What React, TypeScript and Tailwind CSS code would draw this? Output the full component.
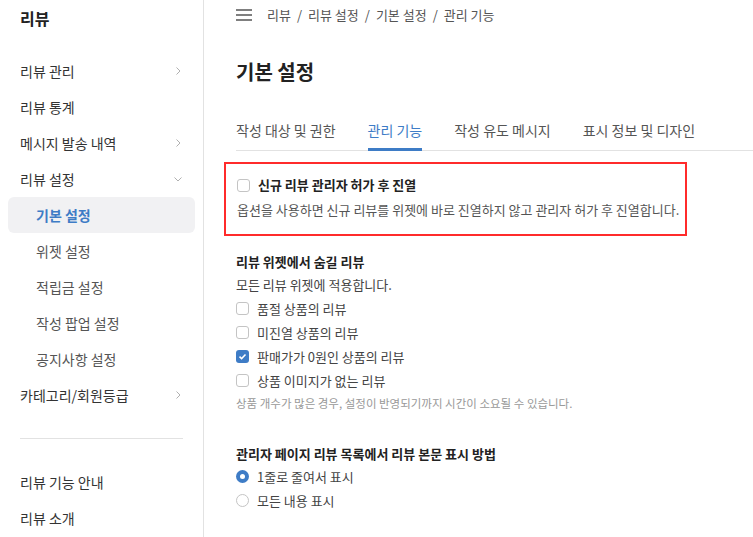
import React from 'react';

const FONT = "font-['Noto_Sans_CJK_KR','Noto_Sans',sans-serif]";

const Chevron: React.FC<{ down?: boolean }> = ({ down }) => (
  <svg width="10" height="10" viewBox="0 0 10 10" className="text-[#b0b0b0]">
    {down ? (
      <path d="M1.5 3.5 L5 7 L8.5 3.5" fill="none" stroke="currentColor" strokeWidth="1" />
    ) : (
      <path d="M3.5 1.5 L7 5 L3.5 8.5" fill="none" stroke="currentColor" strokeWidth="1" />
    )}
  </svg>
);

const Checkbox: React.FC<{ checked?: boolean }> = ({ checked }) =>
  checked ? (
    <span className="w-[13px] h-[13px] rounded-[3px] bg-[#3e7cc6] flex items-center justify-center shrink-0">
      <svg width="9" height="9" viewBox="0 0 9 9">
        <path d="M1.5 4.6 L3.6 6.6 L7.5 2.5" fill="none" stroke="white" strokeWidth="1.5" />
      </svg>
    </span>
  ) : (
    <span className="w-[13px] h-[13px] rounded-[3px] border border-[#c4c4c4] bg-white shrink-0" />
  );

const Radio: React.FC<{ checked?: boolean }> = ({ checked }) =>
  checked ? (
    <span className="w-[13px] h-[13px] rounded-full bg-[#3e7cc6] flex items-center justify-center shrink-0">
      <span className="w-[5px] h-[5px] rounded-full bg-white" />
    </span>
  ) : (
    <span className="w-[13px] h-[13px] rounded-full border border-[#c4c4c4] bg-white shrink-0" />
  );

const menu = [
  { label: '리뷰 관리', chevron: 'right' },
  { label: '리뷰 통계' },
  { label: '메시지 발송 내역', chevron: 'right' },
  { label: '리뷰 설정', chevron: 'down' },
];

const subMenu = ['기본 설정', '위젯 설정', '적립금 설정', '작성 팝업 설정', '공지사항 설정'];

const crumbs = ['리뷰', '리뷰 설정', '기본 설정', '관리 기능'];

const tabs = ['작성 대상 및 권한', '관리 기능', '작성 유도 메시지', '표시 정보 및 디자인'];

const hideOptions = [
  { label: '품절 상품의 리뷰', checked: false },
  { label: '미진열 상품의 리뷰', checked: false },
  { label: '판매가가 0원인 상품의 리뷰', checked: true },
  { label: '상품 이미지가 없는 리뷰', checked: false },
];

const App: React.FC = () => {
  return (
    <div className={`${FONT} w-[753px] h-[537px] overflow-hidden flex bg-white text-[#333]`}>
      {/* sidebar */}
      <aside className="w-[204px] shrink-0 border-r border-[#e2e2e2] flex flex-col">
        <div className="h-[36px] flex items-center px-5 text-[16px] font-bold text-[#222]">리뷰</div>
        <nav className="mt-[17px] flex flex-col">
          {menu.map((m) => (
            <div key={m.label} className="h-[36px] flex items-center justify-between pl-5 pr-[20px] text-[14px]">
              <span>{m.label}</span>
              {m.chevron && <Chevron down={m.chevron === 'down'} />}
            </div>
          ))}
          {subMenu.map((s, i) => (
            <div
              key={s}
              className={
                i === 0
                  ? 'mx-2 h-[36px] flex items-center pl-7 rounded-md bg-[#f1f1f3] text-[14px] font-bold text-[#3e7cc6]'
                  : 'mx-2 h-[36px] flex items-center pl-7 text-[14px] text-[#555]'
              }
            >
              {s}
            </div>
          ))}
          <div className="h-[36px] flex items-center justify-between pl-5 pr-[20px] text-[14px]">
            <span>카테고리/회원등급</span>
            <Chevron />
          </div>
        </nav>
        <div className="mx-5 mt-[25px] border-t border-[#e2e2e2]" />
        <div className="mt-[25px] flex flex-col">
          <div className="h-[36px] flex items-center pl-5 text-[14px]">리뷰 기능 안내</div>
          <div className="h-[36px] flex items-center pl-5 text-[14px]">리뷰 소개</div>
        </div>
      </aside>

      {/* main */}
      <main className="flex-1 flex flex-col pl-8">
        <div className="h-[30px] flex items-center gap-[15px]">
          <svg width="16" height="12" viewBox="0 0 16 12" className="text-[#555]">
            <path d="M0 1 H16 M0 6 H16 M0 11 H16" stroke="currentColor" strokeWidth="1.4" />
          </svg>
          <div className="flex items-center text-[13px] text-[#555]">
            {crumbs.map((c, i) => (
              <React.Fragment key={c}>
                {i > 0 && <span className="mx-[6px]">/</span>}
                <span>{c}</span>
              </React.Fragment>
            ))}
          </div>
        </div>
        <h1 className="mt-[26px] h-[32px] flex items-center text-[20px] font-bold text-[#222]">기본 설정</h1>

        <div className="mt-[26px] flex gap-[32px] border-b border-[#e2e2e2] text-[14px] text-[#555]">
          {tabs.map((t, i) => (
            <div
              key={t}
              className={
                i === 1
                  ? 'pt-[6px] pb-[6px] border-b-[3px] border-[#3e7cc6] text-[#3e7cc6] -mb-px'
                  : 'pt-[6px] pb-[9px]'
              }
            >
              {t}
            </div>
          ))}
        </div>

        <section className="mt-[11px] -ml-3 w-[463px] border-2 border-[#ff2b2b] pl-[11px] pt-[10px] pb-[14px]">
          <label className="flex items-center gap-[8px] h-[22px]">
            <Checkbox />
            <span className="text-[13px] font-bold text-[#222]">신규 리뷰 관리자 허가 후 진열</span>
          </label>
          <p className="mt-[4px] text-[13px] text-[#555]">
            옵션을 사용하면 신규 리뷰를 위젯에 바로 진열하지 않고 관리자 허가 후 진열합니다.
          </p>
        </section>

        <section className="mt-[15px]">
          <h2 className="h-[22px] flex items-center text-[13px] font-bold text-[#222]">리뷰 위젯에서 숨길 리뷰</h2>
          <p className="h-[24px] flex items-center text-[13px] text-[#444]">모든 리뷰 위젯에 적용합니다.</p>
          {hideOptions.map((o) => (
            <label key={o.label} className="h-[24px] flex items-center gap-[8px]">
              <Checkbox checked={o.checked} />
              <span className="text-[13px] text-[#444]">{o.label}</span>
            </label>
          ))}
          <p className="h-[22px] flex items-center text-[11.5px] text-[#999]">
            상품 개수가 많은 경우, 설정이 반영되기까지 시간이 소요될 수 있습니다.
          </p>
        </section>

        <section className="mt-[28px]">
          <h2 className="h-[22px] flex items-center text-[13px] font-bold text-[#222]">
            관리자 페이지 리뷰 목록에서 리뷰 본문 표시 방법
          </h2>
          <label className="h-[24px] flex items-center gap-[8px]">
            <Radio checked />
            <span className="text-[13px] text-[#444]">1줄로 줄여서 표시</span>
          </label>
          <label className="h-[24px] flex items-center gap-[8px]">
            <Radio />
            <span className="text-[13px] text-[#444]">모든 내용 표시</span>
          </label>
        </section>
      </main>
    </div>
  );
};

export default App;
